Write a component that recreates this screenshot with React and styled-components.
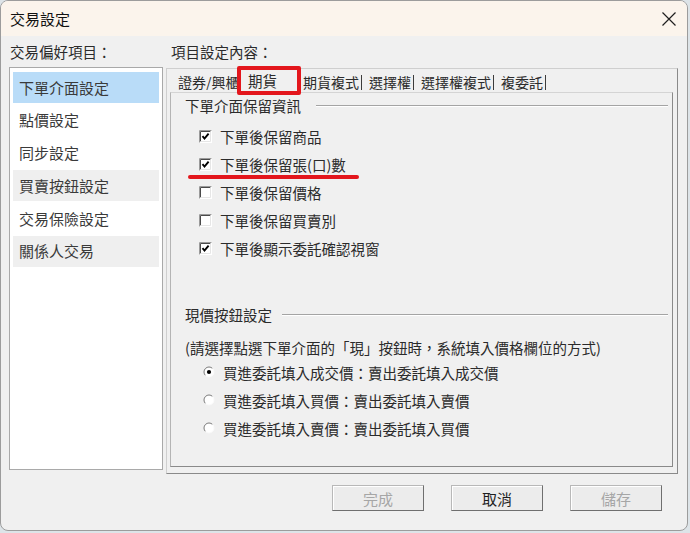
import React from 'react'
import styled, { createGlobalStyle } from 'styled-components'

const GlobalStyle = createGlobalStyle`
  body {
    margin: 0;
    background: #dde4e8;
    font-family: "Noto Sans CJK TC", "Noto Sans CJK SC", "Liberation Sans", sans-serif;
  }
`

const Window = styled.div`
  width: 688px;
  height: 531px;
  box-sizing: border-box;
  border: 1px solid #9c9c9c;
  border-radius: 8px;
  overflow: hidden;
  display: flex;
  flex-direction: column;
  background: #f0f0f0;
  color: #2b2b2b;
  font-size: 14.5px;
`

const TitleBar = styled.div`
  height: 35px;
  flex: none;
  display: flex;
  align-items: center;
  justify-content: space-between;
  padding: 0 11px 0 9px;
  background: #fbf4ec;
  font-size: 15px;
  color: #111;
`

const Body = styled.div`
  flex: 1;
  display: flex;
  flex-direction: column;
  padding: 8px 9px 0 8px;
`

const Columns = styled.div`
  display: flex;
  gap: 3px;
`

const LeftCol = styled.div`
  width: 154px;
  display: flex;
  flex-direction: column;
`

const RightCol = styled.div`
  width: 512px;
  display: flex;
  flex-direction: column;
`

const Label = styled.div`
  height: 16px;
  line-height: 16px;
  padding-left: ${p => p.$indent || 1}px;
  margin-bottom: ${p => p.$gap || 7}px;
`

const List = styled.div`
  height: 403px;
  box-sizing: border-box;
  border: 1px solid #a9a9a9;
  background: #fff;
  padding: 4px 3px;
`

const ListItem = styled.div`
  height: 31px;
  margin-bottom: 1.8px;
  display: flex;
  align-items: center;
  padding: 0 0 1px 6px;
  box-sizing: border-box;
  font-size: 15px;
  color: #3a3a3a;
  background: ${p => (p.$selected ? '#b9dcf8' : p.$shade ? '#efefef' : 'transparent')};
`

const Frame = styled.div`
  height: 406px;
  box-sizing: border-box;
  border: 1px solid #cfcfcf;
  border-right-color: #8a8a8a;
  border-bottom-color: #8a8a8a;
  padding: 0 4px 6px 3px;
  display: flex;
  flex-direction: column;
`

const TabStrip = styled.div`
  height: 23px;
  flex: none;
  display: flex;
  align-items: flex-end;
  padding-left: 8px;
  font-size: 14px;
`

const TabClip = styled.div`
  width: 61px;
  overflow: hidden;
  white-space: nowrap;
  line-height: 16px;
  margin-bottom: 2px;
`

const SelectedTab = styled.div`
  position: relative;
  z-index: 1;
  width: 60px;
  height: 24px;
  margin-bottom: -1px;
  box-sizing: border-box;
  border-top: 1px solid #fff;
  border-left: 1px solid #fff;
  border-right: 1px solid #8a8a8a;
  background: #f0f0f0;
  padding: 3px 0 0 8px;
  line-height: 16px;
  font-size: 14.5px;
`

const RedBox = styled.div`
  position: absolute;
  left: -3px;
  top: -4px;
  width: 64px;
  height: 29px;
  box-sizing: border-box;
  border: 4px solid #e3161c;
  border-radius: 2px;
`

const Tab = styled.div`
  line-height: 15px;
  margin: 0 0 2px ${p => p.$gap || 7}px;
  padding-right: 2px;
  border-right: 1px solid #3c3c3c;
  white-space: nowrap;
`

const TabPanel = styled.div`
  flex: 1;
  box-sizing: border-box;
  border: 1px solid #b4b4b4;
  border-top-color: #d4d4d4;
  border-right-color: #8a8a8a;
  border-bottom-color: #8a8a8a;
  padding: 5px 4px 0 14px;
  display: flex;
  flex-direction: column;
`

const GroupHead = styled.div`
  display: flex;
  align-items: center;
  gap: ${p => p.$gap || 14}px;
  height: 16px;
  line-height: 16px;
  margin-top: ${p => p.$top || 0}px;
`

const Groove = styled.div`
  flex: 1;
  border-top: 1px solid #a4a4a4;
  border-bottom: 1px solid #fff;
`

const Rows = styled.div`
  display: flex;
  flex-direction: column;
  margin: ${p => p.$top || 0}px 0 0 ${p => p.$left || 14}px;
`

const Row = styled.div`
  position: relative;
  height: 28px;
  display: flex;
  align-items: center;
  gap: 8px;
  white-space: nowrap;
`

const RedLine = styled.div`
  position: absolute;
  left: -11px;
  top: 25px;
  width: 171px;
  height: 4px;
  border-radius: 2px;
  background: #e3161c;
`

const Note = styled.div`
  height: 16px;
  line-height: 16px;
  margin-top: 17px;
  white-space: nowrap;
`

const ButtonRow = styled.div`
  display: flex;
  justify-content: flex-end;
  gap: 27px;
  margin-top: 11px;
  padding-right: 16px;
`

const Button = styled.div`
  width: 92px;
  height: 26px;
  box-sizing: border-box;
  display: flex;
  align-items: center;
  justify-content: center;
  background: #ececec;
  border: 1px solid #b8b8b8;
  border-right-color: #6f6f6f;
  border-bottom-color: #6f6f6f;
  box-shadow: inset 1px 1px 0 #fff;
  font-size: 15px;
  color: ${p => (p.$disabled ? '#a6a6a6' : '#1e1e1e')};
`

const CloseIcon = () => (
  <svg width="14" height="14" viewBox="0 0 14 14">
    <path d="M0.5 0.5 L13.5 13.5 M13.5 0.5 L0.5 13.5" stroke="#1f1f1f" strokeWidth="1.2" />
  </svg>
)

const CheckBox = ({ checked }) => (
  <svg width="13" height="13" viewBox="0 0 13 13" style={{ flex: 'none' }}>
    <rect x="0" y="0" width="13" height="13" fill="#fff" />
    <path d="M0.5 12.5 V0.5 H12.5" stroke="#9a9a9a" fill="none" />
    <path d="M1.5 11.5 V1.5 H11.5" stroke="#4a4a4a" fill="none" />
    <path d="M1.5 11.5 H11.5 V1.5" stroke="#e6e6e6" fill="none" />
    {checked && (
      <path d="M3.5 6.2 L5.5 8.6 L9.6 3.6" stroke="#000" strokeWidth="1.9" fill="none" />
    )}
  </svg>
)

const Radio = ({ checked }) => (
  <svg width="12" height="12" viewBox="0 0 12 12" style={{ flex: 'none' }}>
    <circle cx="6" cy="6" r="5" fill="#fff" />
    <path d="M2.46 9.54 A5 5 0 0 1 9.54 2.46" stroke="#7a7a7a" fill="none" />
    <path d="M9.54 2.46 A5 5 0 0 1 2.46 9.54" stroke="#fafafa" fill="none" />
    {checked && <circle cx="6" cy="6" r="2.1" fill="#000" />}
  </svg>
)

const menuItems = [
  { label: '下單介面設定', selected: true },
  { label: '點價設定' },
  { label: '同步設定' },
  { label: '買賣按鈕設定', shade: true },
  { label: '交易保險設定' },
  { label: '關係人交易', shade: true },
]

const checks = [
  { label: '下單後保留商品', checked: true },
  { label: '下單後保留張(口)數', checked: true, marked: true },
  { label: '下單後保留價格' },
  { label: '下單後保留買賣別' },
  { label: '下單後顯示委託確認視窗', checked: true },
]

const radios = [
  { label: '買進委託填入成交價：賣出委託填入成交價', checked: true },
  { label: '買進委託填入買價：賣出委託填入賣價' },
  { label: '買進委託填入賣價：賣出委託填入買價' },
]

const App = () => (
  <>
    <GlobalStyle />
    <Window>
      <TitleBar>
        <span>交易設定</span>
        <CloseIcon />
      </TitleBar>
      <Body>
        <Columns>
          <LeftCol>
            <Label>交易偏好項目：</Label>
            <List>
              {menuItems.map(item => (
                <ListItem key={item.label} $selected={item.selected} $shade={item.shade}>
                  {item.label}
                </ListItem>
              ))}
            </List>
          </LeftCol>
          <RightCol>
            <Label $indent={5} $gap={8}>項目設定內容：</Label>
            <Frame>
              <TabStrip>
                <TabClip>證券/興櫃</TabClip>
                <SelectedTab>
                  期貨
                  <RedBox />
                </SelectedTab>
                <Tab $gap={4}>期貨複式</Tab>
                <Tab>選擇權</Tab>
                <Tab>選擇權複式</Tab>
                <Tab>複委託</Tab>
              </TabStrip>
              <TabPanel>
                <GroupHead $gap={15}>
                  <span>下單介面保留資訊</span>
                  <Groove />
                </GroupHead>
                <Rows $top={8} $left={14}>
                  {checks.map(c => (
                    <Row key={c.label}>
                      <CheckBox checked={c.checked} />
                      <span>{c.label}</span>
                      {c.marked && <RedLine />}
                    </Row>
                  ))}
                </Rows>
                <GroupHead $top={45} $gap={10}>
                  <span>現價按鈕設定</span>
                  <Groove />
                </GroupHead>
                <Note>(請選擇點選下單介面的「現」按鈕時，系統填入價格欄位的方式)</Note>
                <Rows $top={2} $left={18}>
                  {radios.map(r => (
                    <Row key={r.label}>
                      <Radio checked={r.checked} />
                      <span>{r.label}</span>
                    </Row>
                  ))}
                </Rows>
              </TabPanel>
            </Frame>
          </RightCol>
        </Columns>
        <ButtonRow>
          <Button $disabled>完成</Button>
          <Button>取消</Button>
          <Button $disabled>儲存</Button>
        </ButtonRow>
      </Body>
    </Window>
  </>
)

export default App
